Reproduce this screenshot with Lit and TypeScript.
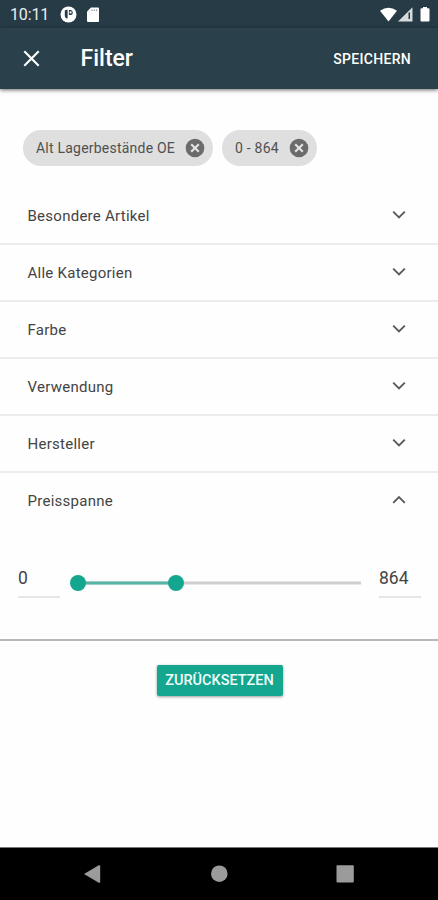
import { LitElement, html, css, svg } from "lit";
import { customElement, state } from "lit/decorators.js";

const chevron = (up: boolean) => html`<svg class="chevron" width="14" height="10" viewBox="0 0 14 10">
  <path d=${up ? "M1.2 7.8 L7 2 L12.8 7.8" : "M1.2 1.7 L7 7.5 L12.8 1.7"} fill="none" stroke="#5a5a5a" stroke-width="1.9" />
</svg>`;

const removeIcon = html`<svg width="20" height="20" viewBox="0 0 20 20">
  <circle cx="10" cy="10" r="9.3" fill="#6b6b6b" />
  <path d="M6.2 6.2 L13.8 13.8 M13.8 6.2 L6.2 13.8" stroke="#e4e4e4" stroke-width="2.1" />
</svg>`;

@customElement("app-root")
export class AppRoot extends LitElement {
  @state() private chips = ["Alt Lagerbestände OE", "0 - 864"];
  @state() private sections = ["Besondere Artikel", "Alle Kategorien", "Farbe", "Verwendung", "Hersteller", "Preisspanne"];
  @state() private open = "Preisspanne";

  static styles = css`
    :host {
      display: flex;
      flex-direction: column;
      height: 900px;
      width: 100%;
      overflow: hidden;
      background: #fefefe;
      font-family: Roboto, "Liberation Sans", sans-serif;
      color: #444;
    }
    * { box-sizing: border-box; }
    svg { display: block; flex: none; }
    .status {
      height: 28px;
      flex: none;
      display: flex;
      align-items: center;
      justify-content: space-between;
      padding: 1px 5px 0 10px;
      background: #263b45;
      color: #e9edef;
      font-size: 16px;
      letter-spacing: -0.15px;
    }
    .left { display: flex; align-items: center; }
    .time { width: 39px; }
    .left .app { margin-left: 11px; }
    .left .card { margin-left: 9px; }
    .bar {
      height: 61px;
      flex: none;
      display: flex;
      align-items: center;
      padding: 0 27px 0 23px;
      background: #2a404a;
      color: #fff;
      box-shadow: 0 1px 4px rgba(0, 0, 0, 0.6);
    }
    .title { margin: 0 auto 0 40.5px; font-size: 23px; font-weight: 500; line-height: 28px; }
    .save { font-size: 14px; font-weight: 500; letter-spacing: 0.3px; }
    .chips { display: flex; gap: 9px; height: 97px; flex: none; padding: 41px 23px 0; }
    .chip {
      height: 36px;
      display: flex;
      align-items: center;
      gap: 10px;
      padding: 0 8px 0 13px;
      border-radius: 18px;
      background: #dfdfdf;
      font-size: 14px;
      color: #505050;
      letter-spacing: 0.22px;
    }
    .row {
      height: 57px;
      flex: none;
      display: flex;
      align-items: center;
      justify-content: space-between;
      padding: 0 32px 0 27.5px;
      font-size: 15px;
      letter-spacing: 0.26px;
    }
    .chevron { margin-top: -1px; }
    .row + .row { border-top: 2px solid #ececec; }
    .chips + .row { padding-top: 2px; }
    .range {
      height: 113px;
      flex: none;
      display: flex;
      padding: 39px 17px 0 18px;
      border-bottom: 2px solid #b9b9b9;
    }
    .value { width: 42px; height: 31px; border-bottom: 2px solid #e6e6e6; font-size: 17.5px; line-height: 22px; }
    .slider { flex: none; margin: 7px 18px 0 9px; }
    .action { display: flex; justify-content: center; padding: 24px 0 0 1px; flex: 1; align-items: flex-start; }
    .reset {
      width: 126px;
      height: 31px;
      display: flex;
      align-items: center;
      justify-content: center;
      border-radius: 2px;
      background: #14a68f;
      color: #f2fffc;
      font-size: 14.5px;
      font-weight: 500;
      box-shadow: 0 1px 3px rgba(0, 0, 0, 0.4);
    }
    .nav { height: 53px; flex: none; background: #000; border-top: 1px solid #777; }
  `;

  render() {
    return html`
      <div class="status">
        <div class="left">
          <span class="time">10:11</span>
          <svg class="app" width="17" height="17" viewBox="0 0 17 17">
            <circle cx="8.5" cy="8.5" r="8" fill="#fff" />
            <path d="M4.8 4.6 Q6 3.6 7.6 3.8 V12.6 H6.6 Q5 11.6 4.8 10Z M8.9 4 H11 Q12.8 4.4 12.8 7 Q12.8 8.8 10.6 9 H8.9Z" fill="#263b45" />
            <circle cx="10.6" cy="6.4" r="1.1" fill="#fff" />
          </svg>
          <svg class="card" width="14" height="16" viewBox="0 0 14 16">
            <path d="M5 .5 H12 Q13 .5 13 1.5 V14 Q13 15 12 15 H2 Q1 15 1 14 V4.5Z" fill="#fff" />
            <path d="M6 2.5 V4 M8.3 2.5 V4 M10.6 2.5 V4" stroke="#7a878d" stroke-width="1" />
          </svg>
        </div>
        <svg width="54" height="18" viewBox="0 0 54 18">
          <path d="M1 4.8 Q9.5 -1.3 18 4.8 L9.5 15.5Z" fill="#fff" />
          <path d="M19 15.5 L33.5 1.2 V15.5Z" fill="#d5dadc" />
          <path d="M29.5 6.5 H31 V13 H29.5Z" fill="#263b45" />
          <path d="M42.5 2.2 H44 V1 H48 V2.2 H49.5 Q50.5 2.2 50.5 3.2 V14.5 Q50.5 15.5 49.5 15.5 H42.5 Q41.5 15.5 41.5 14.5 V3.2 Q41.5 2.2 42.5 2.2Z" fill="#fff" />
        </svg>
      </div>
      <div class="bar">
        <svg width="17" height="17" viewBox="0 0 17 17">
          <path d="M1.3 1.3 L15.7 15.7 M15.7 1.3 L1.3 15.7" stroke="#fff" stroke-width="2.1" />
        </svg>
        <span class="title">Filter</span>
        <span class="save">SPEICHERN</span>
      </div>
      <div class="chips">${this.chips.map((c) => html`<div class="chip"><span>${c}</span>${removeIcon}</div>`)}</div>
      ${this.sections.map((s) => html`<div class="row"><span>${s}</span>${chevron(s === this.open)}</div>`)}
      <div class="range">
        <div class="value">0</div>
        <svg class="slider" width="292" height="18" viewBox="0 0 292 18">
          <path d="M9 9 H292" stroke="#cfcfcf" stroke-width="3" />
          <path d="M9 9 H107" stroke="#56b5a5" stroke-width="3" />
          ${[9, 107].map((x) => svg`<circle cx=${x} cy="9" r="8" fill="#14a68f" />`)}
        </svg>
        <div class="value">864</div>
      </div>
      <div class="action"><div class="reset">ZURÜCKSETZEN</div></div>
      <svg class="nav" width="438" height="53" viewBox="0 0 438 52">
        <path d="M84 26 L98.8 17.3 Q100.2 16.8 100.2 18 V34 Q100.2 35.2 98.8 34.7Z" fill="#9b9b9b" />
        <circle cx="219.3" cy="25.7" r="8.3" fill="#9b9b9b" />
        <rect x="336.5" y="17.3" width="17.3" height="17.3" rx="1" fill="#9b9b9b" />
      </svg>
    `;
  }
}
